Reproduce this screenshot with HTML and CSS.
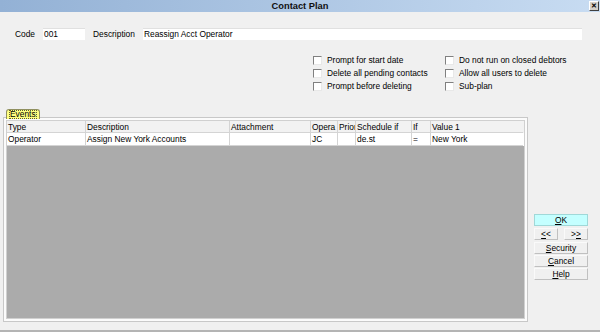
FILE: index.html
```html
<!DOCTYPE html>
<html>
<head>
<meta charset="utf-8">
<link rel="stylesheet" href="styles.css">
</head>
<body>
<div class="window">
  <div class="titlebar">
    <span class="spacer"></span>
    <span class="title">Contact Plan</span>
    <span class="close-wrap"><span class="close">✕</span></span>
  </div>
  <div class="fields">
    <span class="lbl code-lbl">Code</span>
    <span class="input code">001</span>
    <span class="lbl desc-lbl">Description</span>
    <span class="input desc">Reassign Acct Operator</span>
  </div>
  <div class="options">
    <div class="opt"><span class="cb"></span>Prompt for start date</div>
    <div class="opt"><span class="cb"></span>Do not run on closed debtors</div>
    <div class="opt"><span class="cb"></span>Delete all pending contacts</div>
    <div class="opt"><span class="cb"></span>Allow all users to delete</div>
    <div class="opt"><span class="cb"></span>Prompt before deleting</div>
    <div class="opt"><span class="cb"></span>Sub-plan</div>
  </div>
  <div class="lower">
    <div class="events">
      <div class="tab"><span class="tab-text">Events</span></div>
      <div class="frame">
        <div class="inner">
          <div class="row head">
            <span class="c c1">Type</span>
            <span class="c c2">Description</span>
            <span class="c c3">Attachment</span>
            <span class="c c4">Opera</span>
            <span class="c c5">Prior</span>
            <span class="c c6">Schedule if</span>
            <span class="c c7">If</span>
            <span class="c c8">Value 1</span>
          </div>
          <div class="row data">
            <span class="c c1">Operator</span>
            <span class="c c2">Assign New York Accounts</span>
            <span class="c c3"></span>
            <span class="c c4">JC</span>
            <span class="c c5"></span>
            <span class="c c6">de.st</span>
            <span class="c c7">=</span>
            <span class="c c8">New York</span>
          </div>
          <div class="empty"></div>
        </div>
      </div>
    </div>
    <div class="buttons">
      <div class="btn ok"><u>O</u>K</div>
      <div class="btn-pair">
        <div class="btn half"><u>&lt;</u>&lt;</div>
        <div class="btn half">&gt;<u>&gt;</u></div>
      </div>
      <div class="btn"><u>S</u>ecurity</div>
      <div class="btn"><u>C</u>ancel</div>
      <div class="btn"><u>H</u>elp</div>
    </div>
  </div>
</div>
</body>
</html>
```

FILE: styles.css
```css
* { box-sizing: border-box; }
html, body { margin: 0; padding: 0; }
body {
  width: 600px;
  height: 332px;
  overflow: hidden;
  background: #f0f0f0;
  font-family: "Liberation Sans", Arial, sans-serif;
  font-size: 8.4px;
  color: #000;
}
.window {
  width: 600px;
  height: 332px;
  display: flex;
  flex-direction: column;
  border-bottom: 2px solid #b4b4b4;
}
.titlebar {
  height: 12px;
  display: grid;
  grid-template-columns: 1fr auto 1fr;
  align-items: center;
  background: linear-gradient(to right, #93b1d5, #c8dcf2);
}
.title {
  font-weight: bold;
  font-size: 9.3px;
  line-height: 12px;
  color: #101010;
}
.close-wrap {
  display: flex;
  justify-content: flex-end;
  padding-right: 1px;
}
.close {
  width: 10px;
  height: 10px;
  background: #d4d0c8;
  border: 1px solid;
  border-color: #fff #404040 #404040 #fff;
  font-size: 7px;
  font-weight: bold;
  line-height: 8px;
  text-align: center;
}
.fields {
  display: flex;
  align-items: center;
  margin-top: 16px;
  padding-left: 15px;
  height: 12px;
}
.lbl { display: block; }
.code-lbl { width: 28px; }
.desc-lbl { width: 50px; margin-left: 8px; }
.input {
  display: block;
  height: 12px;
  background: #fff;
  border-top: 1px solid #e0e0e0;
  padding-left: 1px;
  line-height: 11px;
  white-space: nowrap;
}
.code { width: 42px; }
.desc { width: 439px; }
.options {
  margin-top: 16px;
  padding-left: 313px;
  display: grid;
  grid-template-columns: 132px auto;
  grid-auto-rows: 13px;
}
.opt {
  display: flex;
  align-items: flex-start;
  line-height: 9px;
  white-space: nowrap;
}
.cb {
  width: 9px;
  height: 9px;
  margin-right: 5px;
  background: #fff;
  border: 1px solid;
  border-color: #808080 #e8e8e8 #e8e8e8 #808080;
  flex: none;
}
.lower {
  display: flex;
  margin-top: 14px;
}
.events {
  padding-left: 3px;
}
.tab {
  margin-left: 3px;
  width: 34px;
  height: 10px;
  background: #ffff80;
  border: 1px solid #909060;
  border-bottom: none;
  border-radius: 3px 3px 0 0;
  padding: 0 2px;
  line-height: 8px;
  position: relative;
  z-index: 1;
  margin-bottom: -2px;
}
.tab-text {
  display: block;
  outline: 1px dotted #606030;
  outline-offset: -1px;
  height: 9px;
  padding-left: 1px;
}
.frame {
  width: 525px;
  height: 205px;
  border: 1px solid #c8c8c8;
  padding: 2px;
  background: #fbfbfb;
}
.inner {
  height: 100%;
  border: 1px solid #d0d0d0;
  display: flex;
  flex-direction: column;
  background: #ababab;
}
.row {
  display: flex;
  flex: none;
}
.row.head { height: 12px; background: #f2f2f2; }
.row.data { height: 13px; background: #fff; }
.c {
  display: block;
  border-right: 1px solid #d4d4d4;
  border-bottom: 1px solid #d4d4d4;
  padding-left: 1px;
  white-space: nowrap;
  overflow: hidden;
  line-height: 12px;
}
.row.data .c { line-height: 12px; }
.c1 { width: 79px; }
.c2 { width: 144px; }
.c3 { width: 81px; }
.c4 { width: 27px; }
.c5 { width: 18px; }
.c6 { width: 56px; }
.c7 { width: 19px; }
.c8 { width: 92px; border-right: none; }
.empty { flex: 1; }
.buttons {
  margin-left: 6px;
  margin-top: 105px;
  width: 54px;
  display: flex;
  flex-direction: column;
  gap: 1px;
}
.btn {
  height: 12px;
  line-height: 10px;
  text-align: center;
  background: #f0f0f0;
  border: 1px solid;
  border-color: #fafafa #c0c0c0 #c0c0c0 #fafafa;
}
.btn.ok {
  background: #c4ffff;
  border-color: #a0d8d8;
  margin-bottom: 1px;
}
.btn-pair {
  display: flex;
  justify-content: space-between;
  margin-bottom: 1px;
}
.btn.half { width: 24px; }
```
